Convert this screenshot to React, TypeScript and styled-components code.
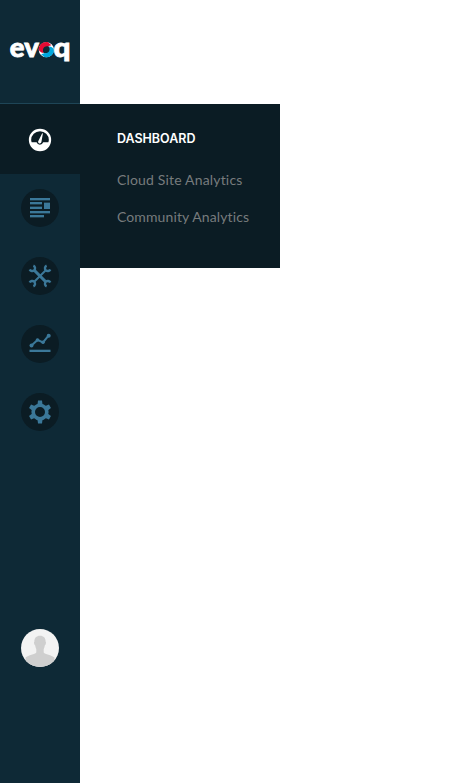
import React from "react";
import styled, { createGlobalStyle } from "styled-components";

const GlobalStyle = createGlobalStyle`
  * { box-sizing: border-box; }
  body { margin: 0; background: #fff; }
`;

const Layout = styled.div`
  display: flex;
  align-items: flex-start;
  height: 783px;
`;

const Sidebar = styled.aside`
  display: flex;
  flex-direction: column;
  width: 80px;
  height: 100%;
  background: #0e2936;
`;

const LogoArea = styled.div`
  height: 104px;
  padding-top: 20px;
  border-bottom: 1px solid #1e4557;
  svg { display: block; }
`;

const ActiveItem = styled.button`
  display: flex;
  align-items: center;
  justify-content: center;
  width: 80px;
  height: 70px;
  padding: 2px 0 0;
  border: 0;
  background: #0b1c24;
`;

const Nav = styled.nav`
  display: flex;
  flex-direction: column;
  align-items: center;
  gap: 30px;
  padding-top: 15px;
`;

const RoundButton = styled.button`
  width: 38px;
  height: 38px;
  padding: 0;
  border: 0;
  border-radius: 50%;
  background: #0b1c24;
  svg { display: block; }
`;

const Avatar = styled.div`
  width: 38px;
  height: 38px;
  margin: auto auto 116px;
  border-radius: 50%;
  overflow: hidden;
  background: #f3f3f3;
  svg { display: block; }
`;

const Submenu = styled.section`
  width: 200px;
  height: 164px;
  margin-top: 104px;
  padding: 25px 0 0 37px;
  background: #0b1c24;
  white-space: nowrap;
`;

const Heading = styled.h2`
  margin: 0 0 22px;
  font-family: Inter, "Liberation Sans", sans-serif;
  font-size: 12.5px;
  line-height: 20px;
  font-weight: 600;
  letter-spacing: -0.02px;
  color: #fff;
`;

const MenuLink = styled.a<{ $spacing: number }>`
  display: block;
  height: 37px;
  font-family: Lato, "Open Sans", sans-serif;
  font-size: 14px;
  line-height: 18px;
  letter-spacing: ${(p) => p.$spacing}px;
  color: #777b7d;
`;

const LogoText = styled.text`
  font-family: Lato, sans-serif;
  font-size: 26px;
  font-weight: 900;
  fill: #fff;
  stroke: #fff;
  stroke-width: 0.8px;
`;

const Logo = () => (
  <svg width="80" height="60" viewBox="0 20 80 60" aria-label="evoq">
    <LogoText x="9.8" y="57" textLength="29" lengthAdjust="spacingAndGlyphs">ev</LogoText>
    <LogoText x="53.6" y="57" textLength="17" lengthAdjust="spacingAndGlyphs">q</LogoText>
    <circle cx="46.3" cy="49.7" r="5.7" fill="none" stroke="#fff" strokeWidth="3.7" />
    <path d="M38.8 50C38.3 45 43 41.3 48 42.2L51.4 45.2L47.8 46.3C43.8 45.7 42 49 43.5 52.8C42 53 40 52 38.8 50Z" fill="#e40b34" />
    <path d="M53.8 49.4C54.3 54.4 49.6 58.1 44.6 57.2L41.2 54.2L44.8 53.1C48.8 53.7 50.6 50.4 49.1 46.6C50.6 46.4 52.6 47.4 53.8 49.4Z" fill="#00a8df" />
  </svg>
);

const Gauge = () => (
  <svg width="24" height="24" viewBox="0 0 24 24">
    <circle cx="12" cy="12" r="10" fill="none" stroke="#fff" strokeWidth="2.3" />
    <path d="M2 14.3H8.6A3.5 3.5 0 0 0 15.2 14.3H22A10.2 10.2 0 0 1 2 14.3Z" fill="#fff" />
    <path d="M14.9 5.6L13.5 13.6A1.7 1.7 0 1 1 10.6 12.6L14.2 5.3Z" fill="#fff" />
  </svg>
);

const blue = "#3b7899";

const Content = () => (
  <svg width="38" height="38" fill={blue} shapeRendering="crispEdges">
    <path d="M9 9h20v2H9zM9 13h12v2H9zM9 18h12v2H9zM9 22h20v2H9zM9 26h14v2H9zM23 14h6v6h-6z" />
    <path opacity=".35" d="M9 11h20v1H9zM9 15h12v1H9zM9 17h12v1H9zM9 24h20v1H9zM9 28h14v1H9zM23 13h6v1h-6z" />
  </svg>
);

const Wrench = ({ flip = false }: { flip?: boolean }) => (
  <g transform={flip ? "translate(38 0) scale(-1 1)" : undefined}>
    <path d="M13 13L25 25" stroke={blue} strokeWidth={flip ? 2 : 3.1} />
    <path d="M12.4 8.7A2.8 2.8 0 1 1 8.7 12.4M25.6 29.3A2.8 2.8 0 1 1 29.3 25.6" fill="none" stroke={blue} strokeWidth="2.4" />
  </g>
);

const Tools = () => (
  <svg width="38" height="38">
    <Wrench flip />
    <Wrench />
  </svg>
);

const Chart = () => (
  <svg width="38" height="38" fill={blue} stroke={blue}>
    <path d="M10.5 20.5L16.5 14.9L22 17.5L27.5 10.7" fill="none" strokeWidth="2" />
    <g stroke="none">
      <circle cx="10.5" cy="20.5" r="2" /><circle cx="16.5" cy="15" r="1.8" />
      <circle cx="22" cy="17.3" r="1.8" /><circle cx="27.7" cy="10.7" r="2" />
      <path d="M8.5 24.7h21V27h-21z" />
    </g>
  </svg>
);

const Gear = () => (
  <svg width="38" height="38">
    <g transform="translate(19 19)">
      <circle r="6.8" fill="none" stroke={blue} strokeWidth="3.6" />
      {[0, 60, 120, 180, 240, 300].map((angle) => (
        <path key={angle} transform={`rotate(${angle})`} d="M-2.6-7L-2-11.5H2L2.6-7Z" fill={blue} />
      ))}
    </g>
  </svg>
);

export default function App() {
  return (
    <>
      <GlobalStyle />
      <Layout>
        <Sidebar>
          <LogoArea><Logo /></LogoArea>
          <ActiveItem aria-label="Dashboard"><Gauge /></ActiveItem>
          <Nav>
            <RoundButton aria-label="Content"><Content /></RoundButton>
            <RoundButton aria-label="Tools"><Tools /></RoundButton>
            <RoundButton aria-label="Reports"><Chart /></RoundButton>
            <RoundButton aria-label="Settings"><Gear /></RoundButton>
          </Nav>
          <Avatar>
            <svg width="38" height="38" fill="#cfcfcf">
              <path d="M19 6.7C15.4 6.7 13.2 9 13.4 12.5C12.5 13.2 13.2 16 14.2 16.5C14.4 18.3 15 19.5 15.3 20.3V23.5C14 25.5 7.5 26 4.5 28.5V38H33.5V28.5C30.5 26 24 25.5 22.7 23.5V20.3C23.2 19.4 23.6 18 23.8 16.5C24.8 16 25.5 13.2 24.6 12.5C24.8 9 22.6 6.7 19 6.7Z" />
            </svg>
          </Avatar>
        </Sidebar>
        <Submenu>
          <Heading>DASHBOARD</Heading>
          <MenuLink $spacing={0.17}>Cloud Site Analytics</MenuLink>
          <MenuLink $spacing={0.11}>Community Analytics</MenuLink>
        </Submenu>
      </Layout>
    </>
  );
}
